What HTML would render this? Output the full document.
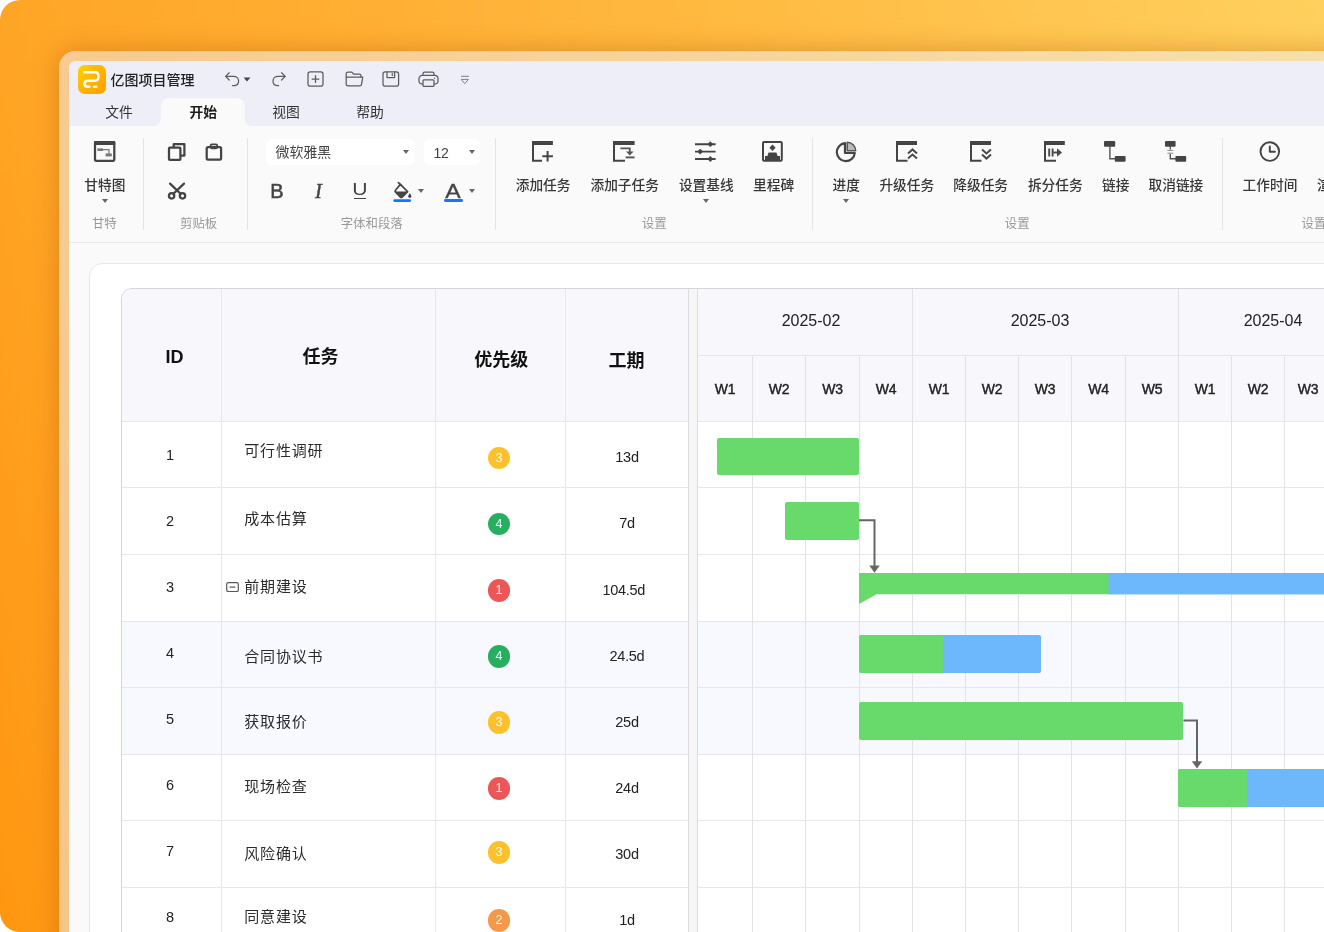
<!DOCTYPE html>
<html lang="zh-CN">
<head>
<meta charset="utf-8">
<title>亿图项目管理</title>
<style>
*{box-sizing:border-box;margin:0;padding:0}
html,body{width:1324px;height:932px;overflow:hidden;background:#fff}
body{position:relative;font-family:"Liberation Sans","Noto Sans CJK SC",sans-serif;color:#333}
.abs{position:absolute}
.bg{position:absolute;left:0;top:0;width:1324px;height:932px;border-radius:20px 0 0 20px;
 background:linear-gradient(75deg,#ff9610 0%,#ffa526 16%,#ffb83e 58%,#ffd05e 100%);}
.frame{position:absolute;left:59px;top:51px;width:1300px;height:920px;border-radius:16px 0 0 0;
 background:rgba(240,240,250,.5);box-shadow:0 0 26px rgba(170,75,0,.38)}
.win{position:absolute;left:69px;top:61px;width:1290px;height:900px;border-radius:7px 0 0 0;background:#fafafa;overflow:hidden}
.titlebar{position:absolute;left:0;top:0;width:100%;height:65px;background:#eeeef8}
.ribbon{position:absolute;left:0;top:65px;width:100%;height:116.5px;background:#fafafa;border-bottom:1px solid #e9e9e9}
/* everything below positioned in page coords via .page layer */
.page{position:absolute;left:0;top:0;width:1324px;height:932px;overflow:hidden;will-change:transform}
.t{position:absolute;white-space:nowrap;line-height:1;transform:translate(-50%,-50%)}
.tl{position:absolute;white-space:nowrap;line-height:1;transform:translate(0,-50%)}
svg{position:absolute;overflow:visible}
.sep{position:absolute;width:1px;top:138px;height:92px;background:#e4e4e4}
.rl{font-size:13.7px;color:#383838;font-weight:500}
.gl{font-size:12.4px;color:#999}
.tri{position:absolute;width:0;height:0;border-left:3.5px solid transparent;border-right:3.5px solid transparent;border-top:4px solid #666;transform:translate(-50%,-50%)}

.hd{font-size:18px;font-weight:700;color:#111}
.mo{font-size:16px;color:#222}
.wk{font-size:14px;color:#222;-webkit-text-stroke:.4px #222;letter-spacing:-.2px}
.num{font-size:14.5px;color:#222;letter-spacing:-.3px}
.tk{font-size:15px;color:#2a2a2a;letter-spacing:.8px}
.pb{width:22.8px;height:22.8px;border-radius:50%;color:rgba(255,255,255,.9);font-size:12.5px;line-height:22.8px;text-align:center}
</style>
</head>
<body>
<div class="bg"></div>
<div class="frame"></div>
<div class="win">
  <div class="titlebar"></div>
  <div class="ribbon"></div>
</div>
<div class="page">

<!-- logo -->
<div class="abs" style="left:78.4px;top:65.1px;width:28px;height:28.7px;border-radius:6.5px;background:linear-gradient(135deg,#ffd400 0%,#ffb400 50%,#ff9f00 100%)"></div>
<svg style="left:78.4px;top:64.7px" width="28" height="28" viewBox="0 0 28 28" fill="none" stroke="#fff" stroke-width="2.5" stroke-linecap="round" stroke-linejoin="round">
 <path d="M6.400 7.200H16.800C19.200 7.200 20.400 9 20.400 11.400C20.400 13.900 19.200 15.800 16.800 15.800H9.600C7.600 15.800 6.500 17 6.500 18.800C6.500 20.600 7.600 21.800 9.600 21.800H11.400"/>
 <path d="M15.800 21.800H18.400" stroke-opacity=".8"/>
</svg>
<div class="tl" style="left:110.5px;top:80.3px;font-size:14px;font-weight:500;color:#222">亿图项目管理</div>
<!-- quick access icons -->
<svg style="left:224px;top:71px" width="30" height="17" viewBox="0 0 30 17" fill="none" stroke="#5c5c5c" stroke-width="1.25" stroke-linecap="round" stroke-linejoin="round">
 <path d="M5.2 1.8L1.6 5.4L5.2 9"/><path d="M1.9 5.4H9.6C12.6 5.4 14.6 7.4 14.6 10C14.6 12.7 12.6 14.6 9.8 14.6H8.6"/>
 <path d="M19.6 6.6H26.4L23 10.4Z" fill="#444" stroke="none"/>
</svg>
<svg style="left:270px;top:71px" width="18" height="17" viewBox="0 0 18 17" fill="none" stroke="#5c5c5c" stroke-width="1.25" stroke-linecap="round" stroke-linejoin="round">
 <path d="M11.6 1.8L15.2 5.4L11.6 9"/><path d="M14.9 5.4H8C5 5.4 3 7.4 3 10C3 12.7 5 14.6 7.8 14.6H8.6"/>
</svg>
<svg style="left:307px;top:71px" width="17" height="16" viewBox="0 0 17 16" fill="none" stroke="#5c5c5c" stroke-width="1.25" stroke-linecap="round" stroke-linejoin="round">
 <rect x="1" y="0.9" width="15" height="14.2" rx="2.2"/><path d="M8.5 4.6V11.4M5.1 8H11.9"/>
</svg>
<svg style="left:344.5px;top:71px" width="19" height="16" viewBox="0 0 19 16" fill="none" stroke="#5c5c5c" stroke-width="1.25" stroke-linecap="round" stroke-linejoin="round">
 <path d="M1.2 6V3C1.2 1.9 2 1.1 3.1 1.1H6.8L8.6 3H14.2C15.3 3 16 3.8 16 4.8V6"/>
 <path d="M1.2 6H17.4C17.6 6 17.8 6.2 17.7 6.5L16.6 13.2C16.4 14.3 15.7 14.9 14.7 14.9H3.1C2 14.9 1.2 14.1 1.2 13V6Z"/>
</svg>
<svg style="left:382px;top:71px" width="18" height="16" viewBox="0 0 18 16" fill="none" stroke="#5c5c5c" stroke-width="1.25" stroke-linecap="round" stroke-linejoin="round">
 <rect x="1" y="0.9" width="15.6" height="14.2" rx="2.2"/><path d="M5 1V6.6H12.6V1"/><path d="M10.3 2.6V4.4"/>
</svg>
<svg style="left:417.5px;top:71px" width="21" height="17" viewBox="0 0 21 17" fill="none" stroke="#5c5c5c" stroke-width="1.25" stroke-linecap="round" stroke-linejoin="round">
 <path d="M5 4.4V2.6C5 1.7 5.7 1 6.6 1H14.4C15.3 1 16 1.7 16 2.6V4.4"/>
 <rect x="1" y="4.4" width="19" height="8.6" rx="3.2"/>
 <rect x="5" y="8.8" width="11" height="6.6" rx="1" fill="#eeeef8"/>
 <path d="M16.6 7.2H16.7"/>
</svg>
<svg style="left:460px;top:75px" width="10" height="10" viewBox="0 0 10 10" fill="none" stroke="#808080" stroke-width="1" stroke-linecap="round" stroke-linejoin="round">
 <path d="M1.4 1.3H8.6"/><path d="M1.6 4.4H8.4L5 8.4Z"/>
</svg>
<!-- tabs -->
<svg style="left:152px;top:98px" width="102" height="28.400" viewBox="0 0 102 28" preserveAspectRatio="none"><path d="M0 28C5 28 8.8 25.5 8.8 20V9C8.8 3.5 12 0.3 17.5 0.3H84C89.5 0.3 92.6 3.5 92.6 9V20C92.6 25.5 96.5 28 102 28Z" fill="#fafafa"/></svg>
<div class="t" style="left:119px;top:112.9px;font-size:13.8px;color:#333">文件</div>
<div class="t" style="left:203.2px;top:112.9px;font-size:13.8px;color:#1c1c1c;font-weight:700">开始</div>
<div class="t" style="left:286px;top:112.9px;font-size:13.8px;color:#333">视图</div>
<div class="t" style="left:370px;top:112.9px;font-size:13.8px;color:#333">帮助</div>
<!--TITLE_END-->

<!-- group 1: gantt -->
<svg style="left:93.5px;top:141.4px" width="21.3" height="20.8" viewBox="0 0 21.3 20.8" fill="none">
 <rect x="1" y="1" width="19.3" height="18.8" rx="1" stroke="#444" stroke-width="2.25"/>
 <rect x="0" y="0" width="21.3" height="4" rx="1" fill="#444"/>
 <rect x="3.4" y="7.4" width="5.6" height="2.6" fill="#777"/>
 <path d="M9 8.7H15V12.4" stroke="#777" stroke-width="1.2"/>
 <rect x="11.6" y="12.4" width="6.2" height="3" fill="#777"/>
</svg>
<div class="t rl" style="left:104.8px;top:186.3px">甘特图</div>
<div class="tri" style="left:104.5px;top:201.2px"></div>
<div class="t gl" style="left:104.3px;top:223.7px">甘特</div>
<div class="sep" style="left:143.2px"></div>
<!-- group 2: clipboard -->
<svg style="left:167px;top:142px" width="20" height="20" viewBox="0 0 20 20" fill="none" stroke="#444" stroke-width="2.25" stroke-linejoin="round">
 <rect x="2" y="5.7" width="11.4" height="12.2" rx="0.8"/>
 <path d="M6.7 5.4V2.1H17.4V13.6H13.8"/>
</svg>
<svg style="left:204px;top:142px" width="20" height="20" viewBox="0 0 20 20" fill="none" stroke="#444" stroke-width="2.25" stroke-linejoin="round">
 <rect x="2.7" y="5.2" width="14.4" height="12.4" rx="1.4"/>
 <rect x="6.6" y="2.3" width="6.6" height="4" rx="1.2" stroke-width="1.8"/>
</svg>
<svg style="left:167px;top:181.5px" width="20" height="19" viewBox="0 0 20 19" fill="none" stroke="#444" stroke-width="2.25" stroke-linecap="round">
 <circle cx="4.6" cy="13.8" r="2.7"/><circle cx="15.5" cy="13.8" r="2.7"/>
 <path d="M3 1.6L13.6 11.8M17 1.6L6.4 11.8"/>
</svg>
<div class="t gl" style="left:198.6px;top:223.7px">剪贴板</div>
<div class="sep" style="left:247.2px"></div>
<!-- group 3: font -->
<div class="abs" style="left:266px;top:138.8px;width:149.3px;height:26.5px;border-radius:6px;background:#fff"></div>
<div class="tl" style="left:275.6px;top:152.6px;font-size:13.9px;color:#444">微软雅黑</div>
<div class="tri" style="left:406px;top:152.4px"></div>
<div class="abs" style="left:424.4px;top:138.8px;width:55.6px;height:26.5px;border-radius:6px;background:#fff"></div>
<div class="tl" style="left:433.6px;top:152.8px;font-size:14px;color:#444;letter-spacing:-.3px">12</div>
<div class="tri" style="left:471.5px;top:152.4px"></div>
<div class="t" style="left:276.8px;top:190.8px;font-size:20px;color:#444;-webkit-text-stroke:.55px #444">B</div>
<div class="t" style="left:318.4px;top:190.8px;font-size:20.5px;font-style:italic;color:#444;-webkit-text-stroke:.45px #444;font-family:'Liberation Serif',serif">I</div>
<div class="t" style="left:360.4px;top:189.6px;font-size:16px;color:#444;transform:translate(-50%,-50%) scaleX(1.32)">U</div><div class="abs" style="left:354.4px;top:197.700px;width:12px;height:1.300px;background:#444"></div>
<svg style="left:392px;top:181px" width="22" height="22" viewBox="0 0 22 22" fill="none">
 <path d="M8.4 3.4L15.6 10.6L10.4 15.8C9.8 16.4 8.8 16.4 8.2 15.8L3.6 11.2C3 10.6 3 9.6 3.600 9L8.4 3.400Z" stroke="#444" stroke-width="1.7" stroke-linejoin="round"/>
 <path d="M3.3 10.4H15.4L10.4 15.600C9.800 16.200 8.800 16.200 8.200 15.600Z" fill="#444"/>
 <path d="M6.400 1.600L9.200 4.400" stroke="#444" stroke-width="1.700" stroke-linecap="round"/>
 <path d="M17.800 12.200C17.800 12.200 19.400 14.200 19.400 15.200C19.400 16.100 18.700 16.800 17.800 16.800C16.900 16.800 16.200 16.100 16.200 15.200C16.200 14.200 17.800 12.200 17.800 12.200Z" fill="#444"/>
 <rect x="1.300" y="18.200" width="17.800" height="2.800" rx="1.400" fill="#1a73ff"/>
</svg>
<div class="tri" style="left:420.8px;top:190.6px"></div>
<div class="t" style="left:453.3px;top:190.600px;font-size:20px;color:#444;-webkit-text-stroke:.3px #444;transform:translate(-50%,-50%) scaleX(1.16)">A</div><div class="abs" style="left:444.400px;top:199.200px;width:18.200px;height:2.800px;border-radius:1.400px;background:#1a73ff"></div>
<div class="tri" style="left:471.9px;top:190.6px"></div>
<div class="t gl" style="left:371.7px;top:223.7px">字体和段落</div>
<div class="sep" style="left:495.2px"></div>

<!-- group 4: settings A -->
<svg style="left:532.3px;top:141.4px" width="21" height="21" viewBox="0 0 21 21" fill="none" stroke="#444">
 <rect x="0" y="0" width="20.9" height="4" fill="#444" stroke="none"/>
 <path d="M1 3V19.700H10" stroke-width="2"/>
 <path d="M15.600 10V20.600M10.300 15.300H20.900" stroke-width="2"/>
</svg>
<div class="t rl" style="left:543.1px;top:186.3px">添加任务</div>
<svg style="left:613px;top:141.4px" width="22" height="21" viewBox="0 0 22 21" fill="none" stroke="#444">
 <rect x="0" y="0" width="21.600" height="4" fill="#444" stroke="none"/>
 <path d="M1 3V19.700H12" stroke-width="2"/>
 <path d="M7.400 7.400H16.800V12" stroke="#555" stroke-width="1.800"/>
 <path d="M13 10.600L16.800 14.600L20.600 10.600Z" fill="#555" stroke="none"/>
 <path d="M12.600 16.400H21.600" stroke="#555" stroke-width="1.900"/>
</svg>
<div class="t rl" style="left:624.7px;top:186.3px">添加子任务</div>
<svg style="left:695px;top:141px" width="21" height="21" viewBox="0 0 21 21" fill="none" stroke="#444" stroke-width="1.900">
 <path d="M0 3.200H20.600M0 10.600H20.600M0 18H20.600"/>
 <path d="M15.300 0.300L18.200 3.200L15.300 6.100L12.400 3.200Z M5.200 7.700L8.100 10.600L5.200 13.500L2.300 10.600Z M15.300 15.100L18.200 18L15.300 20.900L12.400 18Z" fill="#444" stroke="none"/>
</svg>
<div class="t rl" style="left:706.3px;top:186.3px">设置基线</div>
<div class="tri" style="left:706.3px;top:201.2px"></div>
<svg style="left:762.1px;top:141.4px" width="21" height="21" viewBox="0 0 21 21" fill="none">
 <rect x="1" y="1" width="18.800" height="18.700" rx="1" stroke="#444" stroke-width="2"/>
 <path d="M10.500 3.600L13.600 6.800L10.500 10L7.400 6.800Z" fill="#444"/>
 <path d="M6.600 11.600H14.400L15.600 15H18V19H3V15H5.400Z" fill="#444"/>
</svg>
<div class="t rl" style="left:773.6px;top:186.3px">里程碑</div>
<div class="t gl" style="left:654.3px;top:223.7px">设置</div>
<div class="sep" style="left:812.4px"></div>
<!-- group 5: settings B -->
<svg style="left:835px;top:141px" width="22" height="22" viewBox="0 0 22 22" fill="none">
 <path d="M10 2.200A9 9 0 1 0 19.800 12H10Z" stroke="#444" stroke-width="2.200" stroke-linejoin="round"/>
 <path d="M12.200 1.300A8.600 8.600 0 0 1 20.700 9.800H12.200Z" fill="#bbb" stroke="#555" stroke-width="1.500" stroke-linejoin="round"/>
</svg>
<div class="t rl" style="left:846.2px;top:186.3px">进度</div>
<div class="tri" style="left:846.2px;top:201.2px"></div>
<svg style="left:895.8px;top:141.4px" width="22" height="21" viewBox="0 0 22 21" fill="none" stroke="#444">
 <rect x="0" y="0" width="21" height="4" fill="#444" stroke="none"/>
 <path d="M1 3V19.700H11.500" stroke-width="2"/>
 <path d="M12 12.400L16.500 8.400L21 12.400M12 17.600L16.500 13.600L21 17.600" stroke="#4a4a4a" stroke-width="2"/>
</svg>
<div class="t rl" style="left:906.8px;top:186.3px">升级任务</div>
<svg style="left:970.2px;top:141.400px" width="22" height="21" viewBox="0 0 22 21" fill="none" stroke="#444">
 <rect x="0" y="0" width="21" height="4" fill="#444" stroke="none"/>
 <path d="M1 3V19.700H11.500" stroke-width="2"/>
 <path d="M12 8.400L16.500 12.400L21 8.400M12 13.600L16.500 17.600L21 13.600" stroke="#4a4a4a" stroke-width="2"/>
</svg>
<div class="t rl" style="left:980.7px;top:186.3px">降级任务</div>
<svg style="left:1044.400px;top:141.400px" width="22" height="21" viewBox="0 0 22 21" fill="none" stroke="#444">
 <rect x="0" y="0" width="20.800" height="4" fill="#444" stroke="none"/>
 <path d="M1 3V19.700H12" stroke-width="2"/>
 <path d="M5.200 7.400V15.600M8.600 7.400V15.600" stroke="#4a4a4a" stroke-width="1.900"/>
 <path d="M9.200 11.500H14" stroke="#4a4a4a" stroke-width="1.900"/>
 <path d="M13 7.200L18 11.500L13 15.800Z" fill="#4a4a4a" stroke="none"/>
</svg>
<div class="t rl" style="left:1055.300px;top:186.3px">拆分任务</div>
<svg style="left:1104px;top:141.300px" width="22" height="21" viewBox="0 0 22 21" fill="none">
 <rect x="0" y="0" width="11.200" height="5.800" rx="1" fill="#444"/>
 <path d="M5.900 5V17.700H11.500" stroke="#555" stroke-width="1.400"/>
 <rect x="10.800" y="14.900" width="10.800" height="5.900" rx="1" fill="#444"/>
</svg>
<div class="t rl" style="left:1115.700px;top:186.3px">链接</div>
<svg style="left:1164.900px;top:141.300px" width="22" height="21" viewBox="0 0 22 21" fill="none">
 <rect x="0" y="0" width="10.600" height="5.800" rx="1" fill="#444"/>
 <path d="M5.300 5V8.600M5.300 13V17.700H11" stroke="#555" stroke-width="1.400"/>
 <path d="M2.400 9.400H8.200M2.400 12.200H8.200" stroke="#888" stroke-width="1"/>
 <rect x="10.400" y="14.900" width="10.800" height="5.900" rx="1" fill="#444"/>
</svg>
<div class="t rl" style="left:1175.900px;top:186.3px">取消链接</div>
<div class="t gl" style="left:1017.200px;top:223.7px">设置</div>
<div class="sep" style="left:1222.200px"></div>
<!-- group 6 -->
<svg style="left:1258.500px;top:140.800px" width="22" height="22" viewBox="0 0 22 22" fill="none" stroke="#444" stroke-width="1.900" stroke-linecap="round" stroke-linejoin="round">
 <circle cx="10.800" cy="10.600" r="9.300"/><path d="M10.800 5.400V10.800H16"/>
</svg>
<div class="t rl" style="left:1270px;top:186.3px">工作时间</div>
<div class="tl rl" style="left:1317px;top:186.3px">渲染设置</div>
<div class="t gl" style="left:1314px;top:223.7px">设置</div>
<!--RIBBON_END-->
<!--CONTENT_START-->
<div class="abs" style="left:89px;top:263px;width:1300px;height:800px;border:1px solid #e7e7e7;border-radius:13px 0 0 0;background:#fff"></div>
<div class="abs" style="left:121px;top:288px;width:1300px;height:800px;border:1px solid #d6d6da;border-radius:11px 0 0 0;background:#fff;overflow:hidden">
<div class="abs" style="left:-1px;top:-1px;width:1300px;height:133px;background:#f8f8fc"></div>
<div class="abs" style="left:-1px;top:332px;width:1300px;height:133px;background:#f8f9fe"></div>
<div class="abs" style="left:-1px;top:132px;width:1300px;height:1px;background:#e7e7eb"></div>
<div class="abs" style="left:-1px;top:198px;width:1300px;height:1px;background:#e7e7eb"></div>
<div class="abs" style="left:-1px;top:265px;width:1300px;height:1px;background:#e7e7eb"></div>
<div class="abs" style="left:-1px;top:332px;width:1300px;height:1px;background:#e7e7eb"></div>
<div class="abs" style="left:-1px;top:398px;width:1300px;height:1px;background:#e7e7eb"></div>
<div class="abs" style="left:-1px;top:465px;width:1300px;height:1px;background:#e7e7eb"></div>
<div class="abs" style="left:-1px;top:531px;width:1300px;height:1px;background:#e7e7eb"></div>
<div class="abs" style="left:-1px;top:598px;width:1300px;height:1px;background:#e7e7eb"></div>
<div class="abs" style="left:-1px;top:665px;width:1300px;height:1px;background:#e7e7eb"></div>
<div class="abs" style="left:575px;top:66px;width:1300px;height:1px;background:#e7e7eb"></div>
<div class="abs" style="left:99px;top:-1px;width:1px;height:800px;background:#e7e7eb"></div>
<div class="abs" style="left:313px;top:-1px;width:1px;height:800px;background:#e7e7eb"></div>
<div class="abs" style="left:443px;top:-1px;width:1px;height:800px;background:#e7e7eb"></div>
<div class="abs" style="left:566px;top:-1px;width:10px;height:800px;background:#f6f6f7;border-left:1px solid #dcdce0;border-right:1px solid #dcdce0"></div>
<div class="abs" style="left:630px;top:67px;width:1px;height:800px;background:#e3e3e7"></div>
<div class="abs" style="left:683px;top:67px;width:1px;height:800px;background:#e3e3e7"></div>
<div class="abs" style="left:737px;top:67px;width:1px;height:800px;background:#e3e3e7"></div>
<div class="abs" style="left:790px;top:-1px;width:1px;height:800px;background:#e3e3e7"></div>
<div class="abs" style="left:843px;top:67px;width:1px;height:800px;background:#e3e3e7"></div>
<div class="abs" style="left:896px;top:67px;width:1px;height:800px;background:#e3e3e7"></div>
<div class="abs" style="left:949px;top:67px;width:1px;height:800px;background:#e3e3e7"></div>
<div class="abs" style="left:1003px;top:67px;width:1px;height:800px;background:#e3e3e7"></div>
<div class="abs" style="left:1056px;top:-1px;width:1px;height:800px;background:#e3e3e7"></div>
<div class="abs" style="left:1109px;top:67px;width:1px;height:800px;background:#e3e3e7"></div>
<div class="abs" style="left:1162px;top:67px;width:1px;height:800px;background:#e3e3e7"></div>
<div class="abs" style="left:1215px;top:67px;width:1px;height:800px;background:#e3e3e7"></div>
</div>
<div class="t hd" style="left:174.6px;top:357.2px">ID</div>
<div class="t hd" style="left:320.4px;top:357.2px">任务</div>
<div class="t hd" style="left:501.3px;top:360.3px">优先级</div>
<div class="t hd" style="left:626.6px;top:360.5px">工期</div>
<div class="t mo" style="left:811px;top:321px">2025-02</div>
<div class="t mo" style="left:1040px;top:321px">2025-03</div>
<div class="t mo" style="left:1273px;top:321px">2025-04</div>
<div class="t wk" style="left:725px;top:389px">W1</div>
<div class="t wk" style="left:779px;top:389px">W2</div>
<div class="t wk" style="left:832.5px;top:389px">W3</div>
<div class="t wk" style="left:886px;top:389px">W4</div>
<div class="t wk" style="left:939px;top:389px">W1</div>
<div class="t wk" style="left:992px;top:389px">W2</div>
<div class="t wk" style="left:1045px;top:389px">W3</div>
<div class="t wk" style="left:1098.5px;top:389px">W4</div>
<div class="t wk" style="left:1152px;top:389px">W5</div>
<div class="t wk" style="left:1205px;top:389px">W1</div>
<div class="t wk" style="left:1258px;top:389px">W2</div>
<div class="t wk" style="left:1308px;top:389px">W3</div>
<div class="t num" style="left:170px;top:454.5px">1</div>
<div class="tl tk" style="left:244.3px;top:450px">可行性调研</div>
<div class="abs pb" style="left:487.6px;top:446.6px;background:#fcc12d">3</div>
<div class="t num" style="left:627px;top:457.2px">13d</div>
<div class="t num" style="left:170px;top:520.5px">2</div>
<div class="tl tk" style="left:244.3px;top:517.8px">成本估算</div>
<div class="abs pb" style="left:487.6px;top:512.7px;background:#27ae60">4</div>
<div class="t num" style="left:627px;top:523.3px">7d</div>
<div class="t num" style="left:170px;top:586.7px">3</div>
<div class="tl tk" style="left:244.3px;top:586.3px">前期建设</div>
<div class="abs pb" style="left:487.6px;top:578.8px;background:#eb5757">1</div>
<div class="t num" style="left:623.7px;top:589.6px">104.5d</div>
<div class="t num" style="left:170px;top:652.7px">4</div>
<div class="tl tk" style="left:244.3px;top:656.4px">合同协议书</div>
<div class="abs pb" style="left:487.6px;top:644.9px;background:#27ae60">4</div>
<div class="t num" style="left:627px;top:655.6px">24.5d</div>
<div class="t num" style="left:170px;top:719px">5</div>
<div class="tl tk" style="left:244.3px;top:720.5px">获取报价</div>
<div class="abs pb" style="left:487.6px;top:710.9px;background:#fcc12d">3</div>
<div class="t num" style="left:627px;top:721.6px">25d</div>
<div class="t num" style="left:170px;top:785px">6</div>
<div class="tl tk" style="left:244.3px;top:786px">现场检查</div>
<div class="abs pb" style="left:487.6px;top:776.9px;background:#eb5757">1</div>
<div class="t num" style="left:627px;top:787.6px">24d</div>
<div class="t num" style="left:170px;top:851px">7</div>
<div class="tl tk" style="left:244.3px;top:852.5px">风险确认</div>
<div class="abs pb" style="left:487.6px;top:840.9px;background:#fcc12d">3</div>
<div class="t num" style="left:627px;top:853.6px">30d</div>
<div class="t num" style="left:170px;top:917px">8</div>
<div class="tl tk" style="left:244.3px;top:915.5px">同意建设</div>
<div class="abs pb" style="left:487.6px;top:908.9px;background:#f2994a">2</div>
<div class="t num" style="left:627px;top:919.8px">1d</div>
<svg style="left:226px;top:582.4px" width="13" height="10.2" viewBox="0 0 13 10.2" fill="none" stroke="#555" stroke-width="1.2"><rect x="0.7" y="0.7" width="11.6" height="8.8" rx="1.6"/><path d="M3.6 5.1H9.4"/></svg>
<div class="abs" style="left:716.6px;top:437.6px;width:142.2px;height:37.2px;background:#68d96b;border-radius:2px"></div>
<div class="abs" style="left:785.2px;top:502px;width:73.6px;height:37.5px;background:#68d96b;border-radius:2px"></div>
<svg style="left:859px;top:573.4px" width="470" height="32" viewBox="0 0 470 32"><path d="M0 0H470V21.3H17.6L0 31Z" fill="#68d96b"/><rect x="249.600" y="0" width="221" height="21.300" fill="#6db7fd"/></svg>
<div class="abs" style="left:859px;top:635.4px;width:182px;height:37.4px;background:#6db7fd;border-radius:2px"></div>
<div class="abs" style="left:859px;top:635.4px;width:83.6px;height:37.4px;background:#68d96b;border-radius:2px 0 0 2px"></div>
<div class="abs" style="left:859px;top:702px;width:324.4px;height:38px;background:#68d96b;border-radius:2px"></div>
<div class="abs" style="left:1178px;top:769px;width:152px;height:38px;background:#6db7fd;border-radius:2px"></div>
<div class="abs" style="left:1178px;top:769px;width:68.6px;height:38px;background:#68d96b;border-radius:2px 0 0 2px"></div>
<svg style="left:0;top:0" width="1324" height="932" viewBox="0 0 1324 932" fill="none"><path d="M859 520.200H874.500V566" stroke="#666" stroke-width="2"/><path d="M869.300 565.400H879.700L874.500 572.800Z" fill="#666"/><path d="M1183.400 720.400H1197V762" stroke="#666" stroke-width="2"/><path d="M1191.800 761.200H1202.200L1197 768.600Z" fill="#666"/></svg>
<!--CONTENT_END-->
</div>
</body>
</html>
